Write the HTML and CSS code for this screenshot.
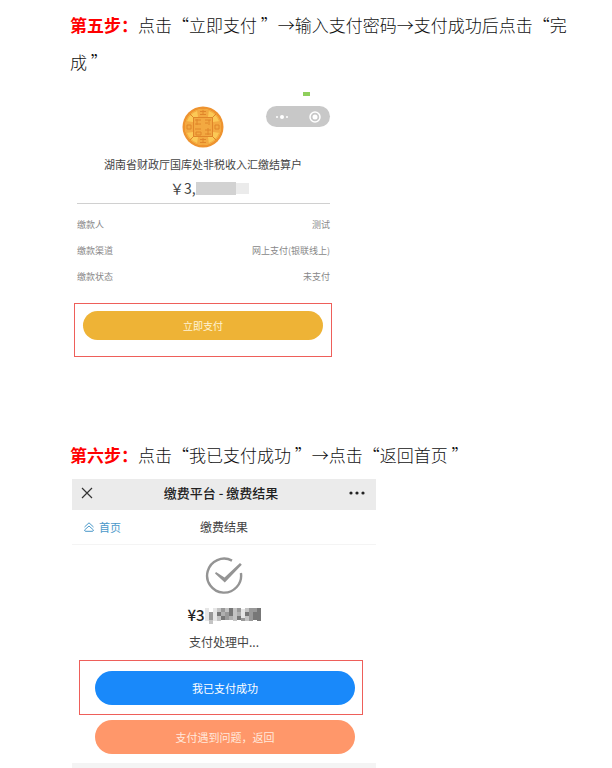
FILE: index.html
```
<!DOCTYPE html>
<html lang="zh-CN">
<head>
<meta charset="utf-8">
<meta name="viewport" content="width=device-width, initial-scale=1">
<title>缴费操作步骤</title>
<link rel="stylesheet" href="styles.css">
</head>
<body>
<main class="doc">
  <section class="step">
    <p class="step-text"><strong class="step-label">第五步：</strong>点击“立即支付 ”→输入支付密码→支付成功后点击“完成 ”</p>
    <div class="shot pay">
      <div class="pay-head">
        <svg class="coin" viewBox="0 0 42 42" aria-hidden="true">
          <circle cx="21" cy="21" r="20.500" fill="#ee932f"/>
          <circle cx="21" cy="21" r="18" fill="#fbc956"/>
          <circle cx="21" cy="21" r="17.500" fill="none" stroke="#f4a63c" stroke-width="1"/>
          <g fill="#f3a941">
            <path d="M15 4h12l-1 7H16zM15 38h12l-1-7H16zM4 15v12l7-1V16zM38 15v12l-7-1V16z"/>
            <path d="M11 11h20v20H11z"/>
          </g>
          <g stroke="#e0862a" stroke-width="1" fill="none">
            <path d="M11.500 11.500h19v19h-19zM8 8l4 4M34 8l-4 4M8 34l4-4M34 34l-4-4"/>
            <path d="M18 5.500h6M18 8.500h6M21 4v5M18 33.500h6M18 36.500h6M21 32v5M5 19h4v4H5zM33 19h4v4h-4z"/>
            <path d="M13 14h6M15 13v6M13 18h6M23 14h6M27 14v5M23 17h3M13 23h6M14 26h5v3h-5zM23 24h6M26 22v7M23 28h6"/>
          </g>
        </svg>
        <div class="capsule-wrap">
          <span class="battery"></span>
          <div class="capsule">
            <svg class="capsule-dots" viewBox="0 0 14 6" aria-hidden="true"><circle cx="2" cy="3" r="1"/><circle cx="7" cy="3" r="2"/><circle cx="12" cy="3" r="1"/></svg>
            <svg class="capsule-ring" viewBox="0 0 12 12" aria-hidden="true"><circle cx="6" cy="6" r="5" fill="none" stroke="#fff" stroke-width="1.500"/><circle cx="6" cy="6" r="2.500" fill="#fff"/></svg>
          </div>
        </div>
      </div>
      <p class="payee">湖南省财政厅国库处非税收入汇缴结算户</p>
      <p class="sum">￥3,<span class="mask"></span><span class="mask-end"></span></p>
      <dl class="rows">
        <div class="row"><dt>缴款人</dt><dd>测试</dd></div>
        <div class="row"><dt>缴款渠道</dt><dd>网上支付(银联线上)</dd></div>
        <div class="row"><dt>缴款状态</dt><dd>未支付</dd></div>
      </dl>
      <div class="frame pay-frame"><button class="btn btn-gold" type="button">立即支付</button></div>
    </div>
  </section>
  <section class="step">
    <p class="step-text"><strong class="step-label">第六步：</strong>点击“我已支付成功 ”→点击“返回首页 ”</p>
    <div class="shot result">
      <header class="titlebar">
        <button class="icon-btn" type="button" aria-label="关闭"><svg width="12" height="12" viewBox="0 0 12 12"><path d="M1 1l10 10M11 1L1 11" stroke="#333" stroke-width="1.200" fill="none"/></svg></button>
        <h2 class="title">缴费平台 - 缴费结果</h2>
        <button class="icon-btn" type="button" aria-label="更多"><svg width="16" height="4" viewBox="0 0 16 4" fill="#222"><circle cx="2" cy="2" r="1.600"/><circle cx="8" cy="2" r="1.600"/><circle cx="14" cy="2" r="1.600"/></svg></button>
      </header>
      <nav class="subbar">
        <a class="home" href="#"><svg width="10" height="10" viewBox="0 0 10 10" fill="none" stroke="#4a98c9" stroke-width="1"><path d="M.5 5L5 .8l4.500 4.200M.5 8L5 4l4.500 4-.8 1.300H1.300z"/></svg>首页</a>
        <h3 class="subtitle">缴费结果</h3>
      </nav>
      <div class="status">
        <svg class="check" viewBox="0 0 38 38" aria-hidden="true"><path d="M27 3.600A17 17 0 1 0 35.900 16" fill="none" stroke="#949494" stroke-width="2.400"/><path d="M11 15l8.500 5.500L35 6l1.800 1.800L19.800 25.500 10 16.500z" fill="#949494"/></svg>
        <p class="total">¥3<svg class="mosaic" viewBox="0 0 56 18" aria-hidden="true">
          <path fill="#e6e6e6" d="M0 2h4v13H0zM8 2h4v13H8zM36 3h4v9h-4z"/>
          <path fill="#c4c4c4" d="M12 2h4v13h-4zM20 2h4v4h-4zM28 2h4v13h-4zM40 2h4v13h-4zM4 14h4v4H4z"/>
          <path fill="#999" d="M4 6h4v8H4zM16 2h4v4h-4zM20 6h4v8h-4zM32 2h4v4h-4zM36 12h4v3h-4zM44 2h4v13h-4zM48 2h4v4h-4z"/>
          <path fill="#777" d="M12 6h4v4h-4zM16 10h4v4h-4zM24 2h4v8h-4zM32 10h4v4h-4zM40 6h4v4h-4zM48 6h4v8h-4zM52 2h4v13h-4z"/>
          <path fill="#b0b0b0" d="M16 6h4v4h-4zM24 10h4v4h-4zM32 6h4v4h-4z"/>
        </svg></p>
        <p class="state">支付处理中...</p>
      </div>
      <div class="frame done-frame"><button class="btn btn-blue" type="button">我已支付成功</button></div>
      <div class="again"><button class="btn btn-orange" type="button">支付遇到问题，返回</button></div>
      <div class="foot"></div>
    </div>
  </section>
</main>
</body>
</html>
```
FILE: styles.css
```
* { box-sizing: border-box; }
body, p, h2, h3, dl, dd { margin: 0; }
body {
  background: #fff;
  color: #222;
  font-family: "Noto Sans CJK SC", sans-serif;
}
button { font-family: inherit; border: 0; padding: 0; }
svg { display: block; }
.doc { padding: 6px 40px 0 70px; }
.step-text { font-size: 17px; line-height: 37px; font-weight: 300; color: #111; }
.step-label { color: #f00; font-weight: 700; }
.shot { margin-left: 2px; }

.pay { max-width: 260px; padding-top: 12px; margin-bottom: 79px; }
.pay-head { display: grid; grid-template-columns: 1fr 42px 1fr; align-items: end; height: 56px; padding-left: 2px; }
.coin { grid-column: 2; width: 42px; height: 42px; }
.capsule-wrap { display: flex; flex-direction: column; align-items: flex-end; align-self: start; padding-right: 2px; }
.battery { width: 7px; height: 4px; background: #8fcf5c; margin-right: 20px; margin-bottom: 10px; }
.capsule {
  display: flex; align-items: center; justify-content: space-between;
  width: 64px; height: 21px; padding: 0 9px; border-radius: 11px; background: #c8c8c8;
}
.capsule-dots { width: 14px; height: 6px; fill: #fff; }
.capsule-ring { width: 12px; height: 12px; }
.payee { margin-top: 8px; padding-left: 2px; font-size: 11px; line-height: 16px; text-align: center; color: #444; }
.sum { display: flex; align-items: center; margin: 6px 0 0 98px; font-size: 14px; line-height: 20px; font-weight: 400; color: #444; }
.mask { width: 40px; height: 13px; background: #d2d2d2; }
.mask-end { width: 13px; height: 11px; background: #ebebeb; }
.rows { margin: 5px 2px 0 5px; padding-top: 8px; border-top: 1px solid #d0d0d0; font-size: 9px; color: #888; }
.row { display: flex; justify-content: space-between; line-height: 26px; }
.frame { border: 1px solid #ee5f5a; }
.pay-frame { margin: 13px 0 0 2px; padding: 7px 8px 16px; }
.btn { display: block; width: 100%; color: #fff; text-align: center; }
.btn-gold { height: 29px; border-radius: 15px; background: #eeb336; font-size: 10px; color: #fff3d6; }

.result { max-width: 304px; margin-top: 6px; }
.titlebar { display: flex; align-items: center; justify-content: space-between; height: 31px; padding: 0 11px 3px 9px; background: #ebebeb; }
.icon-btn { background: none; }
.title { font-size: 13px; line-height: 20px; font-weight: 500; }
.subbar { display: grid; grid-template-columns: 1fr auto 1fr; align-items: center; height: 35px; padding: 0 12px; border-bottom: 1px solid #f4f4f4; }
.home { display: flex; align-items: center; gap: 5px; font-size: 11px; color: #4a98c9; text-decoration: none; }
.subtitle { font-size: 12px; line-height: 18px; font-weight: 400; color: #444; }
.status { display: flex; flex-direction: column; align-items: center; padding-top: 12px; }
.check { width: 38px; height: 38px; }
.total { display: flex; align-items: center; margin-top: 10px; font-size: 15px; line-height: 20px; font-weight: 500; }
.mosaic { width: 56px; height: 18px; }
.state { margin-top: 8px; font-size: 12px; line-height: 18px; color: #444; }
.done-frame { margin: 9px 13px 0 7px; padding: 10px 7px 9px 15px; }
.btn-blue, .btn-orange { height: 34px; border-radius: 17px; font-size: 11px; }
.btn-blue { background: #1989fa; }
.btn-orange { background: #ff976a; color: #ffe9dd; }
.again { padding: 5px 21px 0 23px; }
.foot { height: 5px; margin-top: 9px; background: #f4f4f4; }
```
